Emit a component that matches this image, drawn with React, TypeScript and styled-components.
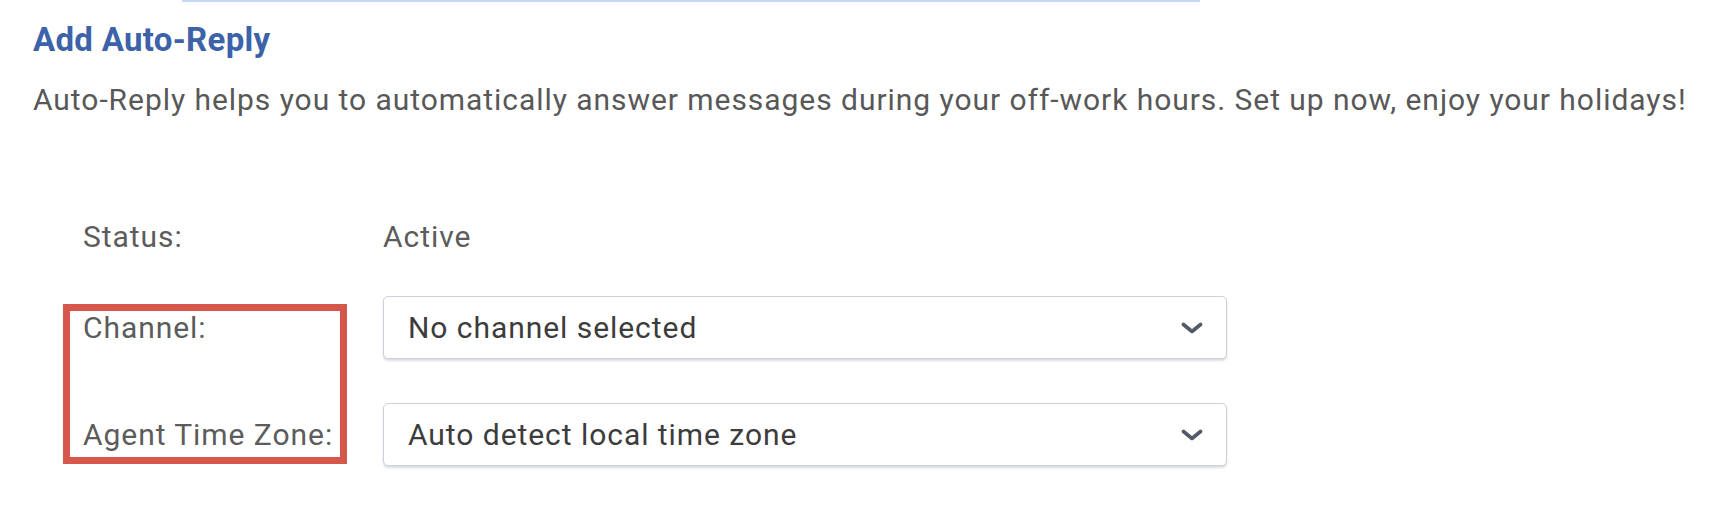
import React from "react";
import styled, { createGlobalStyle } from "styled-components";

const GlobalStyle = createGlobalStyle`
  html, body {
    margin: 0;
    padding: 0;
    background: #ffffff;
  }
  body {
    font-family: Roboto, "Liberation Sans", Arial, sans-serif;
    -webkit-font-smoothing: antialiased;
  }
`;

const Page = styled.div`
  width: 1726px;
  height: 506px;
  box-sizing: border-box;
  padding-left: 33px;
  overflow: hidden;
  background: #ffffff;
`;

const TopEdge = styled.div`
  margin-left: 149px;
  width: 1018px;
  height: 2px;
  background: #c4d8f5;
`;

const Title = styled.h2`
  margin: 18px 0 0 0;
  font-size: 33px;
  line-height: 40px;
  font-weight: 700;
  letter-spacing: 0.3px;
  color: #3c62aa;
`;

const Description = styled.p`
  margin: 22px 0 0 0;
  font-size: 30px;
  line-height: 36px;
  letter-spacing: 0.95px;
  color: #585858;
  white-space: nowrap;
`;

const Form = styled.div`
  position: relative;
  margin-top: 101px;
  padding-left: 50px;
  display: flex;
  flex-direction: column;
`;

const Row = styled.div<{ $gap: number }>`
  display: flex;
  align-items: center;
  margin-top: ${(p) => p.$gap}px;
`;

const Label = styled.div`
  width: 300px;
  flex: none;
  font-size: 30px;
  line-height: 36px;
  letter-spacing: 0.95px;
  color: #5c5c5c;
`;

const Value = styled.div`
  font-size: 30px;
  line-height: 36px;
  letter-spacing: 0.95px;
  color: #5c5c5c;
`;

const Select = styled.div`
  width: 844px;
  height: 63px;
  box-sizing: border-box;
  border: 1.5px solid #cdd2d9;
  border-radius: 5px;
  box-shadow: 0 2px 2px rgba(60, 70, 90, 0.18);
  background: #ffffff;
  display: flex;
  align-items: center;
  justify-content: space-between;
  padding: 0 23px 0 24px;
`;

const SelectText = styled.span`
  font-size: 30px;
  line-height: 36px;
  letter-spacing: 0.95px;
  color: #3c3c3c;
`;

const Chevron = styled.svg`
  width: 22px;
  height: 12px;
  flex: none;
`;

const Highlight = styled.div`
  position: absolute;
  left: 30px;
  top: 85px;
  width: 284px;
  height: 160px;
  box-sizing: border-box;
  border: 7.5px solid #d6574b;
  pointer-events: none;
`;

const ChevronIcon = () => (
  <Chevron viewBox="0 0 22 12">
    <path
      d="M2.5 2.5 L11 9.5 L19.5 2.5"
      fill="none"
      stroke="#525a68"
      strokeWidth="3.6"
      strokeLinecap="round"
      strokeLinejoin="round"
    />
  </Chevron>
);

export default function App() {
  return (
    <>
      <GlobalStyle />
      <Page>
        <TopEdge />
        <Title>Add Auto-Reply</Title>
        <Description>
          Auto-Reply helps you to automatically answer messages during your off-work hours. Set up now, enjoy your holidays!
        </Description>
        <Form>
          <Row $gap={0}>
            <Label>Status:</Label>
            <Value>Active</Value>
          </Row>
          <Row $gap={41}>
            <Label>Channel:</Label>
            <Select>
              <SelectText>No channel selected</SelectText>
              <ChevronIcon />
            </Select>
          </Row>
          <Row $gap={44}>
            <Label>Agent Time Zone:</Label>
            <Select>
              <SelectText>Auto detect local time zone</SelectText>
              <ChevronIcon />
            </Select>
          </Row>
          <Highlight />
        </Form>
      </Page>
    </>
  );
}
